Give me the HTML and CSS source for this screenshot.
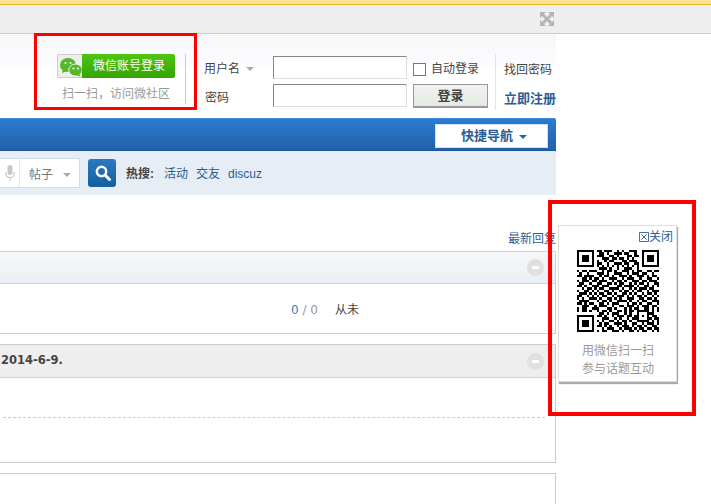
FILE: index.html
```html
<!DOCTYPE html>
<html lang="zh-CN">
<head>
<meta charset="utf-8">
<title>Discuz</title>
<link rel="stylesheet" href="styles.css">
</head>
<body>
<div class="notice"></div>
<div class="toolbar">
  <svg class="expand" viewBox="0 0 14 14" width="14" height="14"><path d="M0 0h6L4 2l3 3 3-3-2-2h6v6l-2-2-3 3 3 3 2-2v6H8l2-2-3-3-3 3 2 2H0V8l2 2 3-3-3-3-2 2z" fill="#b4b4b4"/></svg>
</div>
<header class="header">
  <div class="wx">
    <a class="wx-btn">
      <span class="wx-btn__logo">
        <svg viewBox="0 0 24 20" width="24" height="20"><ellipse cx="9" cy="8" rx="8" ry="7" fill="#55b82a"/><path d="M4 12l-1 4 5-2z" fill="#55b82a"/><ellipse cx="16.5" cy="13" rx="6.8" ry="6" fill="#55b82a" stroke="#eee" stroke-width="1"/><path d="M20 17l2 3-5-2z" fill="#55b82a"/><circle cx="6.5" cy="6" r="1.1" fill="#fff"/><circle cx="11.5" cy="6" r="1.1" fill="#fff"/><circle cx="14.5" cy="11.5" r="1" fill="#fff"/><circle cx="19" cy="11.5" r="1" fill="#fff"/></svg>
      </span>
      <span class="wx-btn__text">微信账号登录</span>
    </a>
    <p class="wx-note">扫一扫，访问微社区</p>
  </div>
  <form class="login">
    <span class="login__label">用户名<i class="caret caret--gray"></i></span>
    <input class="login__input" type="text">
    <label class="login__auto"><input class="login__check" type="checkbox">自动登录</label>
    <span class="login__label login__label--low">密码</span>
    <input class="login__input" type="password">
    <button class="login__btn" type="button">登录</button>
  </form>
  <div class="links">
    <a class="links__plain">找回密码</a>
    <a class="links__reg">立即注册</a>
  </div>
</header>
<nav class="nav">
  <a class="nav__quick">快捷导航<i class="caret caret--blue"></i></a>
</nav>
<div class="search">
  <div class="search__box">
    <svg class="search__mic" viewBox="0 0 10 16" width="10" height="16"><rect x="2.5" y="0" width="5" height="10" rx="2.5" fill="#c8c8c8"/><path d="M.8 7v1.5a4.2 4.2 0 0 0 8.4 0V7M5 13v3" fill="none" stroke="#c8c8c8" stroke-width="1.2"/></svg>
    <span class="search__type">帖子<i class="caret caret--gray"></i></span>
  </div>
  <button class="search__go" type="button">
    <svg viewBox="0 0 16 16" width="16" height="16"><circle cx="6.5" cy="6.5" r="4.7" fill="none" stroke="#fff" stroke-width="2.4"/><path d="M10 10l4.5 4.5" stroke="#fff" stroke-width="3" stroke-linecap="round"/></svg>
  </button>
  <strong class="search__hot">热搜:</strong>
  <a class="search__link">活动</a>
  <a class="search__link">交友</a>
  <a class="search__link">discuz</a>
</div>
<main class="content">
  <a class="latest">最新回复</a>
  <section class="panel">
    <div class="panel__head panel__head--blue"><i class="collapse"></i></div>
    <div class="panel__row">
      <span class="stat"><b class="stat__a">0</b> / 0</span>
      <span class="panel__never">从未</span>
    </div>
  </section>
  <section class="panel panel--second">
    <div class="panel__head panel__head--gray"><strong class="panel__title">2014-6-9.</strong><i class="collapse"></i></div>
    <div class="panel__body"><div class="panel__dash"></div></div>
  </section>
  <section class="panel panel--third"></section>
</main>
<aside class="qr">
  <a class="qr__close"><svg viewBox="0 0 11 11" width="10" height="10"><path d="M.5.5h10v10H.5zM2.5 2.5l6 6M8.5 2.5l-6 6" fill="none" stroke="#2b5d92"/></svg>关闭</a>
  <svg class="qr__code" id="qr" viewBox="0 0 33 33" width="82" height="82" shape-rendering="crispEdges"><path id="qr-path" fill="#000"/></svg>
  <p class="qr__text">用微信扫一扫<br>参与话题互动</p>
</aside>
<div class="mark mark--login"></div>
<div class="mark mark--qr"></div>
<script src="qr.js"></script>
</body>
</html>
```
FILE: styles.css
```css
* { box-sizing: border-box; }
html, body { margin: 0; padding: 0; }
body {
  width: 711px;
  height: 504px;
  overflow: hidden;
  position: relative;
  background: #fff;
  color: #444;
  font: 12px/1.5 "Liberation Sans", "Noto Sans CJK SC", sans-serif;
}
p { margin: 0; }
i { font-style: normal; }
.caret {
  display: inline-block;
  width: 0; height: 0;
  border-style: solid;
  border-width: 4px 4px 0;
  border-color: #aaa transparent transparent;
  vertical-align: 2px;
}
.caret--blue { border-top-color: #1f6aa8; }

.notice { height: 5px; background: #fbe48e; border-bottom: 1px solid #e3b52a; }
.toolbar {
  height: 29px;
  width: 100%;
  background: #eee;
  border-bottom: 1px solid #ccc;
  padding-left: 540px;
  padding-top: 7px;
}
.expand { display: block; }

.header {
  height: 84px;
  width: 556px;
  padding: 20px 0 0 57px;
  display: flex;
  align-items: flex-start;
  background: linear-gradient(#f7f7f9, #fcfcfe 32px, #fff 33px);
  box-shadow: 155px 0 0 #fff;
}
.wx { width: 129px; height: 50px; border-right: 1px solid #ccc; }
.wx-btn { display: flex; width: 118px; height: 24px; }
.wx-btn__logo {
  width: 25px;
  background: #eee;
  border: 1px solid #ccc;
  border-right: 0;
  border-radius: 2px 0 0 2px;
  padding: 2px 0 0 1px;
}
.wx-btn__logo svg { display: block; }
.wx-btn__text {
  flex: 1;
  text-align: center;
  color: #fff;
  line-height: 24px;
  padding-left: 1px;
  background: linear-gradient(#4ec613, #35a403);
  border-radius: 0 2px 2px 0;
}
.wx-note { color: #999; width: 118px; text-align: center; margin-top: 7px; line-height: 18px; }

.login {
  display: grid;
  grid-template-columns: 69px 134px 75px;
  column-gap: 0;
  grid-auto-rows: 23px;
  row-gap: 5px;
  margin: 2px 0 0 18px;
}
.login__label { line-height: 26px; color: #444; }
.login__label .caret { margin-left: 6px; }
.login__label--low { line-height: 28px; padding-left: 1px; }
.login__input {
  width: 134px;
  height: 23px;
  margin: 0;
  padding: 0;
  background: #fff;
  border: 1px solid #ddd;
  border-top-color: #888;
  border-left-color: #888;
  border-radius: 0;
}
.login__auto, .login__btn { margin-left: 6px; }
.login__auto { display: flex; align-items: center; gap: 5px; height: 26px; white-space: nowrap; }
.login__check {
  appearance: none;
  width: 13px;
  height: 13px;
  margin: 0;
  background: #fff;
  border: 1px solid #777;
}
.login__btn {
  width: 75px;
  height: 24px;
  padding: 0;
  font: bold 13px/20px "Liberation Sans", "Noto Sans CJK SC", sans-serif;
  color: #444;
  background: linear-gradient(#f2f2f2, #e8efe6 60%, #e6e6e6);
  border: 1px solid #999;
  border-bottom-width: 2px;
}
.links {
  margin-left: 13px;
  width: 61px;
  height: 56px;
  border-left: 1px solid #e4e4e4;
  padding: 7px 0 0 8px;
  display: flex;
  flex-direction: column;
  gap: 11px;
  white-space: nowrap;
}
.links a { line-height: 18px; }
.links__reg { color: #2b5d92; font-weight: bold; font-size: 13px; }

.nav {
  height: 33px;
  width: 556px;
  padding: 5px 8px 0 0;
  display: flex;
  justify-content: flex-end;
  align-items: flex-start;
  background: linear-gradient(#2b7bcf, #2161ab);
  border-top: 1px solid #3a86d6;
  border-bottom: 1px solid #1d5796;
  border-top-right-radius: 2px;
}
.nav__quick {
  width: 113px;
  height: 24px;
  line-height: 22px;
  text-align: center;
  padding-left: 5px;
  font-size: 13px;
  font-weight: bold;
  color: #2b5d92;
  background: #fff;
  border: 1px solid #cfe2f5;
}
.nav__quick .caret { margin-left: 6px; vertical-align: 1px; }

.search {
  height: 44px;
  width: 556px;
  background: #e6edf4;
  display: flex;
  align-items: center;
}
.search__box {
  width: 80px;
  height: 30px;
  display: flex;
  align-items: center;
  background: #fff;
  border: 1px solid #cfdce6;
  border-left: 0;
}
.search__mic { margin-left: 5px; flex: none; }
.search__type {
  margin-left: 4px;
  padding-left: 9px;
  height: 28px;
  line-height: 32px;
  flex: 1;
  color: #777;
  border-left: 1px solid #dfe6ec;
  white-space: nowrap;
}
.search__type .caret { margin-left: 10px; }
.search__go {
  width: 28px;
  height: 28px;
  margin-left: 8px;
  padding: 0 0 0 1px;
  border: 0;
  border-radius: 3px;
  display: flex;
  align-items: center;
  justify-content: center;
  background: linear-gradient(#2a79c2, #135f9f);
}
.search__hot { margin-left: 10px; min-width: 30px; padding-top: 2px; color: #444; white-space: nowrap; }
.search__link { margin-left: 8px; padding-top: 2px; color: #2b5d92; white-space: nowrap; }

.content { width: 556px; padding-top: 34px; }
.latest { display: block; text-align: right; color: #2b5d92; line-height: 20px; height: 22px; }
.panel { border-right: 1px solid #ccc; border-bottom: 1px solid #ccc; }
.panel__head {
  height: 33px;
  display: flex;
  align-items: center;
  justify-content: space-between;
  padding-right: 11px;
  border-bottom: 1px solid #c5d5e2;
}
.panel__head--blue {
  border-top: 1px solid #c5d5e2;
  background: linear-gradient(#f5f7f9, #eff3f6 60%, #e6edf4);
  justify-content: flex-end;
  margin-right: -1px;
  border-right: 1px solid #c5d5e2;
}
.panel__head--gray { border-top: 1px solid #ccc; background: #eee; height: 34px; }
.panel__title { padding-left: 1px; color: #444; font-family: "DejaVu Sans", sans-serif; font-size: 11.5px; }
.collapse {
  width: 17px;
  height: 17px;
  border-radius: 50%;
  background: #e0e0e0;
  display: flex;
  align-items: center;
  justify-content: center;
}
.collapse::before { content: ""; width: 7px; height: 3px; background: #fff; }
.panel__row { height: 49px; display: flex; align-items: center; padding: 2px 0 0 291px; }
.stat { width: 44px; color: #999; font-family: "DejaVu Sans", sans-serif; }
.stat__a { font-weight: normal; color: #3f7cbf; }
.panel--second { margin-top: 10px; }
.panel__body { height: 84px; padding: 39px 10px 0 3px; }
.panel__dash { border-top: 1px dashed #ccc; }
.panel--third { margin-top: 10px; height: 40px; border-top: 1px solid #ccc; border-bottom: 0; }

.qr {
  position: absolute;
  left: 558px;
  top: 225px;
  width: 119px;
  height: 157px;
  background: #fff;
  border: 1px solid #ddd;
  box-shadow: 1px 2px 1px #aaa;
  padding: 3px 3px 0 18px;
}
.qr__close { display: flex; justify-content: flex-end; align-items: center; color: #2b5d92; line-height: 16px; margin-left: -18px; }
.qr__code { display: block; margin-top: 5px; }
.qr__text { color: #999; line-height: 18px; margin: 10px 0 0 5px; white-space: nowrap; }

.mark { position: absolute; border-style: solid; border-color: #f00; pointer-events: none; }
.mark--login { left: 34px; top: 33px; width: 163px; height: 77px; border-width: 3px; }
.mark--qr { left: 548px; top: 200px; width: 148px; height: 216px; border-width: 4px; }
```
FILE: qr.js
```js
var rows = [
"111111101101110010100111001111111",
"100000100110100111011001001000001",
"101110101110011010001101101011101",
"101110100011101101101010001011101",
"101110101001011000110111001011101",
"100000101100100111011001101000001",
"111111101010101010101010101111111",
"000000000111010010011100100000000",
"101101110010110100111010110011011",
"010010001110100111001011101100100",
"110111100101101001110100111010110",
"001101011010011100101110010011001",
"101110110111001011010011101101110",
"011001001100110101100101011010011",
"110100111011100011011110100110101",
"001011010110011110100101011101100",
"100110101001101001011010110010111",
"011101010110110100110101001011010",
"110010101011001011101010110100101",
"101001110100110101001110011011010",
"011110001011010011110100101100111",
"110101100110101110001011010011001",
"001110010111001001101110101110110",
"101100111000110100010101100110101",
"101101001011010011010110111110101",
"000000000110101110010100100011100",
"111111101101001011101101101010110",
"100000100011100101001011100011011",
"101110101010011010110100111110101",
"101110100101100111010011001011101",
"101110101101010010111010110100110",
"100000100010111001011101011011011",
"111111101011001110100110101100101"
];
var d = "";
rows.forEach(function (row, y) {
  row.replace(/1+/g, function (run, x) {
    d += "M" + x + " " + y + "h" + run.length + "v1h-" + run.length + "z";
    return run;
  });
});
document.getElementById("qr-path").setAttribute("d", d);
```
